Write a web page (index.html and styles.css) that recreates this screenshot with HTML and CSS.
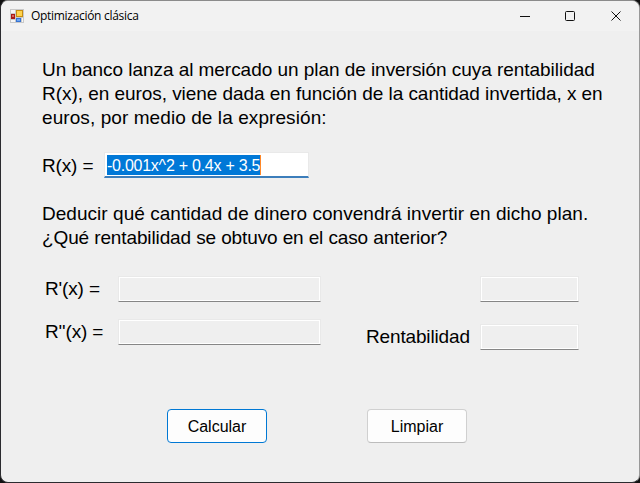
FILE: index.html
```
<!DOCTYPE html>
<html lang="es">
<head>
<meta charset="utf-8">
<title>Optimización clásica</title>
<link rel="stylesheet" href="styles.css">
</head>
<body>
<div class="window">
  <header class="titlebar">
    <svg class="app-icon" width="14" height="14" viewBox="0 0 14 14">
      <rect width="14" height="14" fill="#c9c9c9"/>
      <path d="M1 1h4v3H1zM1 11h4v2H1zM12 9h1v4h-1z" fill="#f6f6f6"/>
      <rect x="1" y="5" width="4" height="5" fill="#a91a16"/><rect x="2" y="6" width="2" height="2" fill="#d9665c"/>
      <rect x="6" y="1" width="7" height="7" fill="#c78d10"/><rect x="7" y="2" width="5" height="5" fill="#ffd34d"/>
      <rect x="6" y="9" width="5" height="4" fill="#3673d3"/><rect x="7" y="10" width="3" height="2" fill="#6ea6f3"/>
    </svg>
    <h1 class="title">Optimización clásica</h1>
    <svg class="controls" width="102" height="10" viewBox="0 0 102 10" fill="none" stroke="#111">
      <path d="M0 5.5h10"/>
      <rect x="45.5" y=".5" width="9" height="9" rx="1"/>
      <path d="M91.5.5l9 9m0-9l-9 9"/>
    </svg>
  </header>
  <main class="form">
    <p class="text"><span class="l1">Un banco lanza al mercado un plan de inversión cuya rentabilidad</span><br><span class="l2">R(x), en euros, viene dada en función de la cantidad invertida, x en</span><br><span class="l3">euros, por medio de la expresión:</span></p>
    <div class="expression">
      <span class="label">R(x) =</span>
      <div class="field active"><span class="selection">-0.001x^2 + 0.4x + 3.5</span></div>
    </div>
    <p class="text"><span class="l4">Deducir qué cantidad de dinero convendrá invertir en dicho plan.</span><br><span class="l5">¿Qué rentabilidad se obtuvo en el caso anterior?</span></p>
    <div class="results">
      <div class="derivatives">
        <span class="label">R'(x) =</span><div class="field"></div>
        <span class="label">R''(x) =</span><div class="field"></div>
      </div>
      <div class="outcome">
        <span></span><div class="field"></div>
        <span class="label">Rentabilidad</span><div class="field"></div>
      </div>
    </div>
    <div class="actions">
      <button class="button primary">Calcular</button>
      <button class="button">Limpiar</button>
    </div>
  </main>
</div>
</body>
</html>
```
FILE: styles.css
```
* { box-sizing: border-box; }
body { margin: 0; background: #111; font-family: "Liberation Sans", Arial, sans-serif; color: #000; overflow: hidden; }
.window { width: 640px; height: 483px; border: 1px solid #2b2b2f; border-top-color: #8b8b8b; border-right-color: #999; border-radius: 8px; background: #efefef; overflow: hidden; }
.titlebar { height: 30px; padding: 0 17px 0 9px; display: flex; align-items: center; background: #f2f2f2; }
.title { margin: 0 0 0 7px; flex: 1; font: 12px/16px "Open Sans", "Noto Sans", sans-serif; letter-spacing: -.3px; }
.app-icon { margin-top: -1px; }
.controls { margin-top: -1px; }
.form { padding: 27px 0 0 41px; }
.text { margin: 0; font-size: 19px; line-height: 24px; white-space: nowrap; }
.l1 { letter-spacing: -.045px; }
.l2 { letter-spacing: -.05px; }
.l3 { letter-spacing: .08px; }
.l4 { letter-spacing: .035px; }
.l5 { letter-spacing: -.12px; }
.label { font-size: 19px; line-height: 24px; letter-spacing: -.15px; white-space: nowrap; }
.expression { display: flex; height: 24px; margin: 23px 0 25px; align-items: center; gap: 10px; }
.expression .label { width: 52px; padding-top: 1px; }
.field { height: 26px; border: 1px solid #e9e9e9; border-bottom-color: #868686; box-shadow: inset 0 0 0 1px #fff; }
.field.active { width: 205px; padding: 2px 2px 0; background: #fff; border-bottom: 2px solid #3c7ebb; line-height: 20px; }
.selection { display: block; width: 154px; height: 20px; background: #0078d7; color: #fff; border-right: 1px solid #ff8728; font-size: 16px; line-height: 21px; letter-spacing: -.25px; white-space: nowrap; }
.results { display: flex; margin: 26px 0 0 3px; }
.derivatives { display: grid; grid-template-columns: 73px 203px; row-gap: 17px; height: 69px; align-items: center; }
.outcome { display: grid; grid-template-columns: 114px 99px; row-gap: 22px; margin-left: 45px; height: 74px; align-items: center; }
.actions { display: flex; gap: 100px; margin: 59px 0 0 125px; }
.button { width: 100px; height: 34px; padding: 1px 0 0; border: 1px solid #d0d0d0; border-bottom-color: #bcbcbc; border-radius: 4px; background: #fdfdfd; font: 16px "Liberation Sans", Arial, sans-serif; color: #000; }
.button.primary { border-color: #0078d4; }
```
